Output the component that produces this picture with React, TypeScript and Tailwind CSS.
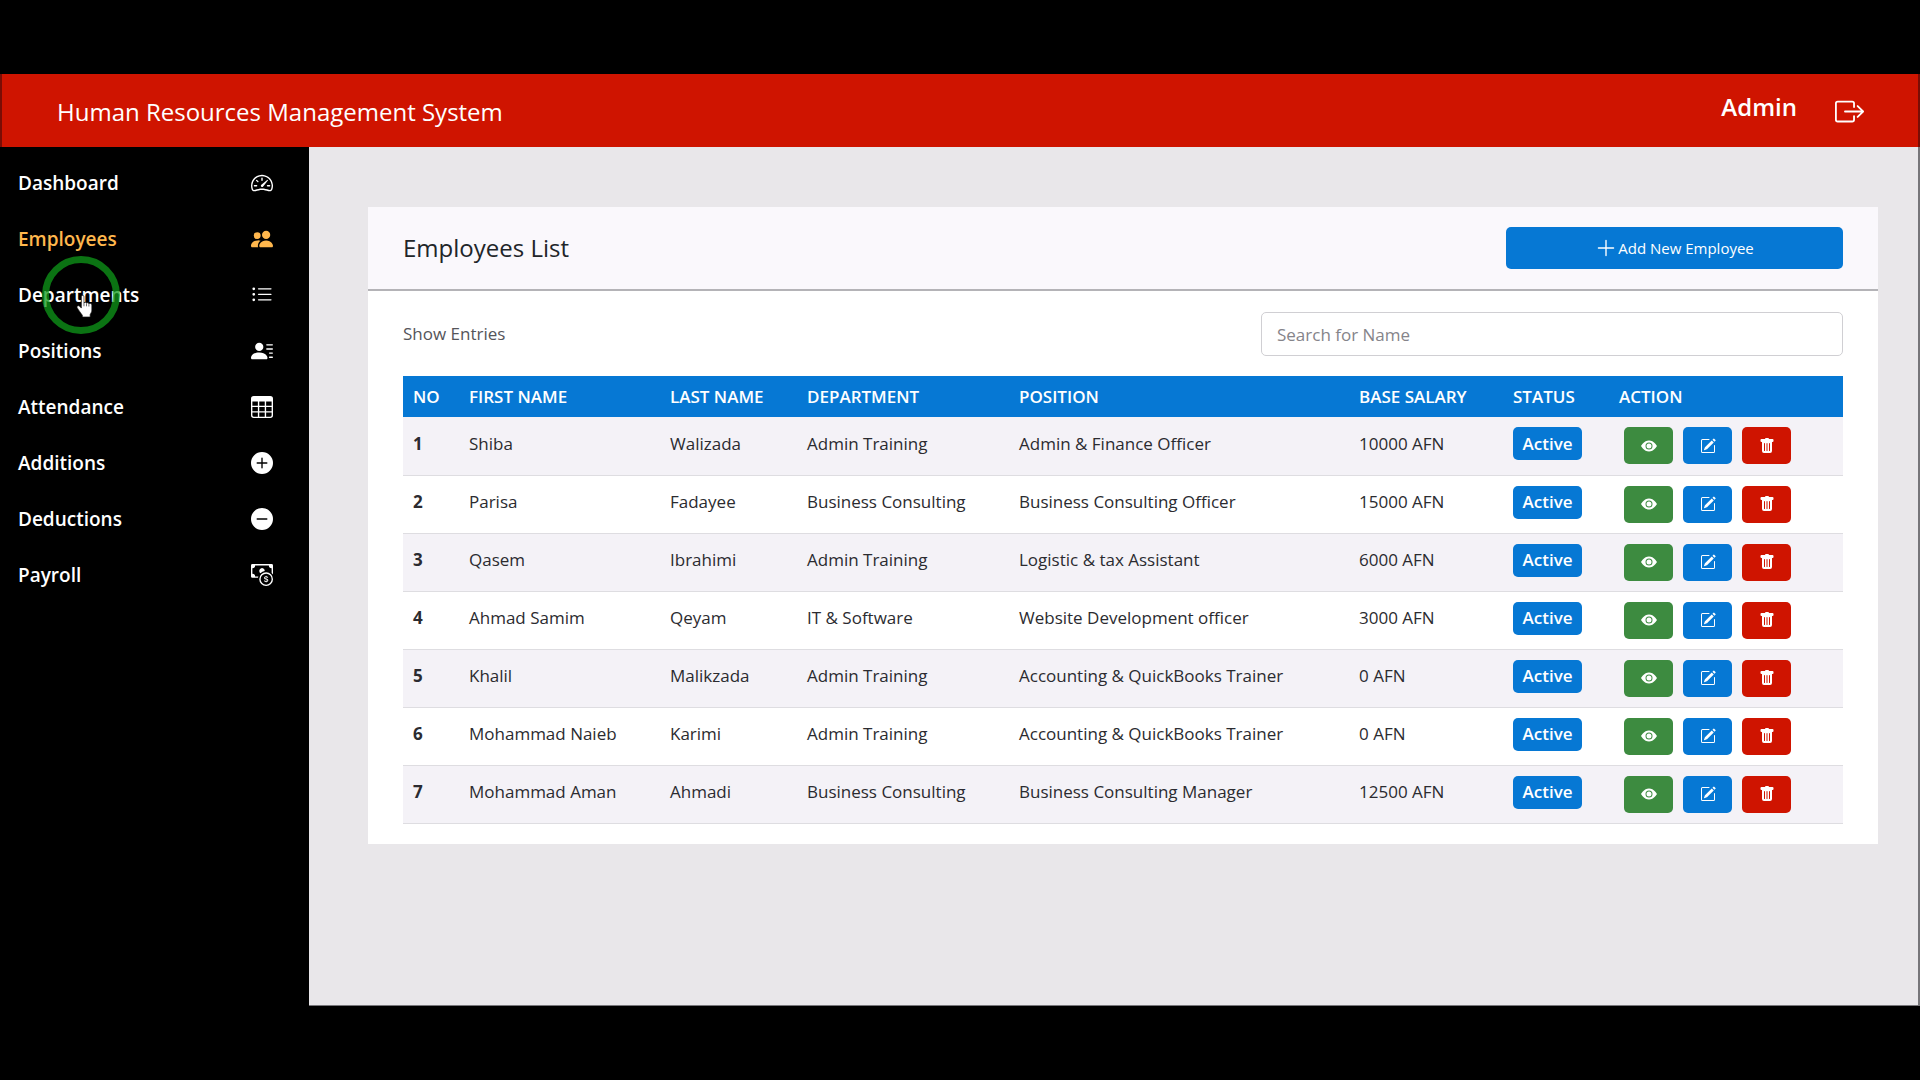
import React from "react";
import {
  BsSpeedometer2,
  BsPeopleFill,
  BsListUl,
  BsPersonLinesFill,
  BsTable,
  BsPlusCircleFill,
  BsDashCircleFill,
  BsCashCoin,
  BsBoxArrowRight,
  BsEyeFill,
  BsPencilSquare,
  BsTrashFill,
  BsPlusLg,
} from "react-icons/bs";
import type { IconType } from "react-icons";

const navItems: { label: string; icon: IconType; active?: boolean; pointed?: boolean }[] = [
  { label: "Dashboard", icon: BsSpeedometer2 },
  { label: "Employees", icon: BsPeopleFill, active: true },
  { label: "Departments", icon: BsListUl, pointed: true },
  { label: "Positions", icon: BsPersonLinesFill },
  { label: "Attendance", icon: BsTable },
  { label: "Additions", icon: BsPlusCircleFill },
  { label: "Deductions", icon: BsDashCircleFill },
  { label: "Payroll", icon: BsCashCoin },
];

const employees = [
  ["Shiba", "Walizada", "Admin Training", "Admin & Finance Officer", "10000 AFN"],
  ["Parisa", "Fadayee", "Business Consulting", "Business Consulting Officer", "15000 AFN"],
  ["Qasem", "Ibrahimi", "Admin Training", "Logistic & tax Assistant", "6000 AFN"],
  ["Ahmad Samim", "Qeyam", "IT & Software", "Website Development officer", "3000 AFN"],
  ["Khalil", "Malikzada", "Admin Training", "Accounting & QuickBooks Trainer", "0 AFN"],
  ["Mohammad Naieb", "Karimi", "Admin Training", "Accounting & QuickBooks Trainer", "0 AFN"],
  ["Mohammad Aman", "Ahmadi", "Business Consulting", "Business Consulting Manager", "12500 AFN"],
];

const columns = [
  { title: "NO", width: "w-[56px]" },
  { title: "FIRST NAME", width: "w-[201px]" },
  { title: "LAST NAME", width: "w-[137px]" },
  { title: "DEPARTMENT", width: "w-[212px]" },
  { title: "POSITION", width: "w-[340px]" },
  { title: "BASE SALARY", width: "w-[154px]" },
  { title: "STATUS", width: "w-[106px]" },
  { title: "ACTION", width: "w-[234px]" },
];

function Pointer() {
  return (
    <span className="pointer-events-none absolute top-1/2 left-[42px] size-[78px] -translate-y-1/2 rounded-full border-[7px] border-[#0f9a1a]/75">
      <svg viewBox="0 0 16 22" className="absolute top-[32px] left-[27px] h-[23px] w-[17px]" aria-hidden="true">
        <path
          d="M5 1.600c0-1.600 2.500-1.600 2.500 0v6c.3-1 2.200-.9 2.400.3.500-.9 2.200-.6 2.300.6.600-.7 2.800-.4 2.800 1v5c0 2-1.200 3-1.600 4.200V21H6v-1.600C4.500 17.500 2.500 14.500 1 12.200c-.8-1.400 1-2.600 2.200-1.500L5 12.500z"
          fill="#fff"
          stroke="#111"
          strokeWidth="0.6"
        />
        <path d="M7.500 7.600v3.200M9.900 8.200v2.600M12.200 8.800v2.200" stroke="#333" strokeWidth="0.700" fill="none" />
      </svg>
    </span>
  );
}

function Header() {
  return (
    <header className="flex h-[73px] shrink-0 items-center justify-between border-x-2 border-[#7a0d05] bg-[#cf1400] pt-[2px] pr-[54px] pl-[55px] text-white">
      <h1 className="text-2xl">Human Resources Management System</h1>
      <div className="flex items-center gap-[38px]">
        <span className="pb-[10px] text-2xl font-semibold">Admin</span>
        <a href="#logout" aria-label="Log out">
          <BsBoxArrowRight className="size-[29px]" />
        </a>
      </div>
    </header>
  );
}

function Sidebar() {
  return (
    <nav className="w-[309px] shrink-0 bg-black pt-2">
      <ul>
        {navItems.map(({ label, icon: Icon, active, pointed }) => (
          <li key={label} className="relative">
            <a
              href={"#" + label.toLowerCase()}
              className={
                "flex h-14 items-center justify-between pr-9 pl-[18px] text-[19px] font-semibold " +
                (active ? "text-[#ffb74d]" : "text-white")
              }
            >
              {label}
              <Icon className="size-[22px]" />
            </a>
            {pointed && <Pointer />}
          </li>
        ))}
      </ul>
    </nav>
  );
}

function EmployeeTable() {
  return (
    <table className="mt-5 w-full table-fixed text-left text-[17px]">
      <thead className="bg-[#0678d4] text-white">
        <tr className="h-[41px]">
          {columns.map((c) => (
            <th key={c.title} scope="col" className={"px-[10px] font-semibold whitespace-nowrap " + c.width}>
              {c.title}
            </th>
          ))}
        </tr>
      </thead>
      <tbody className="text-[#2b2b30]">
        {employees.map((row, i) => (
          <tr key={i} className="h-[58px] border-b border-[#dedde1] odd:bg-[#f4f2f7]">
            <th scope="row" className="px-[10px] pb-1 font-bold">
              {i + 1}
            </th>
            {row.map((cell, j) => (
              <td key={j} className="px-[10px] pb-1 whitespace-nowrap">
                {cell}
              </td>
            ))}
            <td className="px-[10px] pb-1">
              <span className="flex h-[33px] w-[69px] items-center justify-center rounded-[5px] bg-[#0678d4] font-semibold text-white">
                Active
              </span>
            </td>
            <td className="pl-[15px]">
              <div className="flex gap-[10px] text-white">
                <button type="button" aria-label="View" className="flex h-[37px] w-[49px] items-center justify-center rounded-[5px] bg-[#3d8b40]">
                  <BsEyeFill className="size-4" />
                </button>
                <button type="button" aria-label="Edit" className="flex h-[37px] w-[49px] items-center justify-center rounded-[5px] bg-[#0678d4]">
                  <BsPencilSquare className="size-4" />
                </button>
                <button type="button" aria-label="Delete" className="flex h-[37px] w-[49px] items-center justify-center rounded-[5px] bg-[#cf1400]">
                  <BsTrashFill className="size-4" />
                </button>
              </div>
            </td>
          </tr>
        ))}
      </tbody>
    </table>
  );
}

export default function App() {
  return (
    <div className="flex min-h-screen flex-col bg-black py-[74px] font-['Open_Sans','Noto_Sans',sans-serif]">
      <Header />
      <div className="flex flex-1">
        <Sidebar />
        <main className="min-w-0 flex-1 border-r-2 border-b border-[#77767a] bg-[#e9e7ea] pt-[60px] pr-10 pl-[59px]">
          <section className="bg-white">
            <div className="flex h-[84px] items-center justify-between border-b-2 border-[#b4b3b7] bg-[#faf8fc] px-[35px]">
              <h2 className="text-2xl text-[#212529]">Employees List</h2>
              <button
                type="button"
                className="flex h-[42px] w-[337px] items-center justify-center gap-px rounded-[5px] bg-[#0678d4] text-[15px] text-white"
              >
                <BsPlusLg className="size-[22px]" />
                Add New Employee
              </button>
            </div>
            <div className="px-[35px] pt-[21px] pb-5">
              <div className="flex items-center justify-between">
                <label htmlFor="search" className="text-[17px] text-[#55555a]">
                  Show Entries
                </label>
                <input
                  id="search"
                  type="text"
                  placeholder="Search for Name"
                  className="h-11 w-[582px] rounded-[5px] border border-[#d0cfd3] bg-white px-[15px] text-[17px] placeholder:text-[#85848a]"
                />
              </div>
              <EmployeeTable />
            </div>
          </section>
        </main>
      </div>
    </div>
  );
}
